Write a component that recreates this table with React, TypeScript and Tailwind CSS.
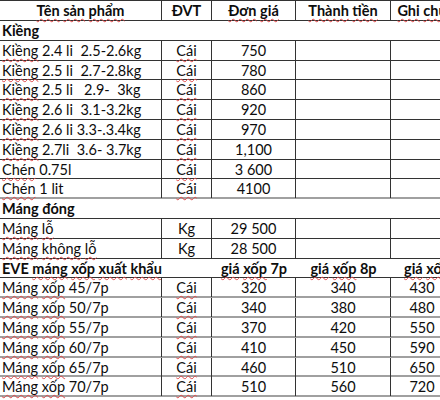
const font = { fontFamily: "Lato, 'Noto Sans', sans-serif" };

const cols = "grid grid-cols-[162px_50px_84px_95px_62px]";

// red spell-check squiggle under one word
const W = ({ children }: { children: string }) => (
  <span className="underline decoration-wavy decoration-[#e04848] decoration-1 underline-offset-[2px] [text-decoration-skip-ink:none]">
    {children}
  </span>
);

// text with words listed in `marked` squiggled
const T = ({ text, marked = [] }: { text: string; marked?: string[] }) => {
  const parts = text.split(/(\s+)/);
  return (
    <>
      {parts.map((p, i) =>
        marked.includes(p) ? <W key={i}>{p}</W> : <span key={i}>{p}</span>
      )}
    </>
  );
};

const MARK = ["Kiềng", "Chén", "Máng", "máng", "lỗ", "không", "xốp", "xuất", "khẩu", "giá", "Cái", "Tên", "sản", "phẩm", "Đơn", "Thành", "tiền", "Ghi", "chú"];

type Item = { name: string; unit: string; p1: string; p2?: string; p3?: string };

const kieng: Item[] = [
  { name: "Kiềng 2.4 li  2.5-2.6kg", unit: "Cái", p1: "750" },
  { name: "Kiềng 2.5 li  2.7-2.8kg", unit: "Cái", p1: "780" },
  { name: "Kiềng 2.5 li   2.9-  3kg", unit: "Cái", p1: "860" },
  { name: "Kiềng 2.6 li  3.1-3.2kg", unit: "Cái", p1: "920" },
  { name: "Kiềng 2.6 li 3.3-.3.4kg", unit: "Cái", p1: "970" },
  { name: "Kiềng 2.7li  3.6- 3.7kg", unit: "Cái", p1: "1,100" },
  { name: "Chén 0.75l", unit: "Cái", p1: "3 600" },
  { name: "Chén 1 lit", unit: "Cái", p1: "4100" },
];

const mang: Item[] = [
  { name: "Máng lỗ", unit: "Kg", p1: "29 500" },
  { name: "Máng không lỗ", unit: "Kg", p1: "28 500" },
];

const xop: Item[] = [
  { name: "Máng xốp 45/7p", unit: "Cái", p1: "320", p2: "340", p3: "430" },
  { name: "Máng xốp 50/7p", unit: "Cái", p1: "340", p2: "380", p3: "480" },
  { name: "Máng xốp 55/7p", unit: "Cái", p1: "370", p2: "420", p3: "550" },
  { name: "Máng xốp 60/7p", unit: "Cái", p1: "410", p2: "450", p3: "590" },
  { name: "Máng xốp 65/7p", unit: "Cái", p1: "460", p2: "510", p3: "650" },
  { name: "Máng xốp 70/7p", unit: "Cái", p1: "510", p2: "560", p3: "720" },
];

const Row = ({ it, grey = false, h = "h-[19.8px]" }: { it: Item; grey?: boolean; h?: string }) => (
  <div className={`${cols} ${h} ${grey ? "border-b-2 border-[#a0a0a0]" : "border-b border-[#333]"}`}>
    <div className="border-r border-[#333] pl-[2px] whitespace-pre leading-[19px]">
      <T text={it.name} marked={MARK} />
    </div>
    <div className="border-r border-[#333] text-center leading-[19px]">
      <T text={it.unit} marked={MARK} />
    </div>
    <div className="border-r border-[#333] text-center leading-[19px]">{it.p1}</div>
    <div className="border-r border-[#333] text-center leading-[19px]">{it.p2 ?? ""}</div>
    <div className="text-center leading-[19px]">{it.p3 ?? ""}</div>
  </div>
);

const Section = ({ title, grey = false }: { title: string; grey?: boolean }) => (
  <div className={`h-[19.8px] pl-[2px] font-bold leading-[19px] ${grey ? "border-b-2 border-[#a0a0a0]" : "border-b border-[#333]"}`}>
    <T text={title} marked={["máng", "xốp", "xuất", "khẩu"]} />
  </div>
);

export default function App() {
  return (
    <div className="w-[440px] h-[400px] overflow-hidden bg-white text-[#0d0d0d] text-[14.5px]" style={font}>
      <div className="w-[453px]">
        <div className={`${cols} h-[21px] border-y border-[#333] font-bold`}>
          <div className="border-r border-[#333] text-center leading-[19px]">
            <T text="Tên sản phẩm" marked={MARK} />
          </div>
          <div className="border-r border-[#333] text-center leading-[19px]">ĐVT</div>
          <div className="border-r border-[#333] text-center leading-[19px]">
            <T text="Đơn giá" marked={MARK} />
          </div>
          <div className="border-r border-[#333] text-center leading-[19px]">
            <T text="Thành tiền" marked={MARK} />
          </div>
          <div className="text-center leading-[19px]">
            <T text="Ghi chú" marked={MARK} />
          </div>
        </div>

        <Section title="Kiềng" />
        {kieng.map((it, i) => (
          <Row key={it.name} it={it} grey={i === kieng.length - 1} />
        ))}

        <Section title="Máng đóng" />
        {mang.map((it) => (
          <Row key={it.name} it={it} />
        ))}

        <div className={`${cols} h-[19.8px] border-b border-[#333] font-bold leading-[19px]`}>
          <div className="pl-[2px] whitespace-nowrap">
            <T text="EVE máng xốp xuất khẩu" marked={MARK} />
          </div>
          <div />
          <div className="text-center whitespace-nowrap">
            <T text="giá xốp 7p" marked={MARK} />
          </div>
          <div className="text-center whitespace-nowrap">
            <T text="giá xốp 8p" marked={MARK} />
          </div>
          <div className="pl-[13px] whitespace-nowrap">
            <T text="giá xốp 9p" marked={MARK} />
          </div>
        </div>
        {xop.map((it) => (
          <Row key={it.name} it={it} grey />
        ))}
      </div>
    </div>
  );
}
